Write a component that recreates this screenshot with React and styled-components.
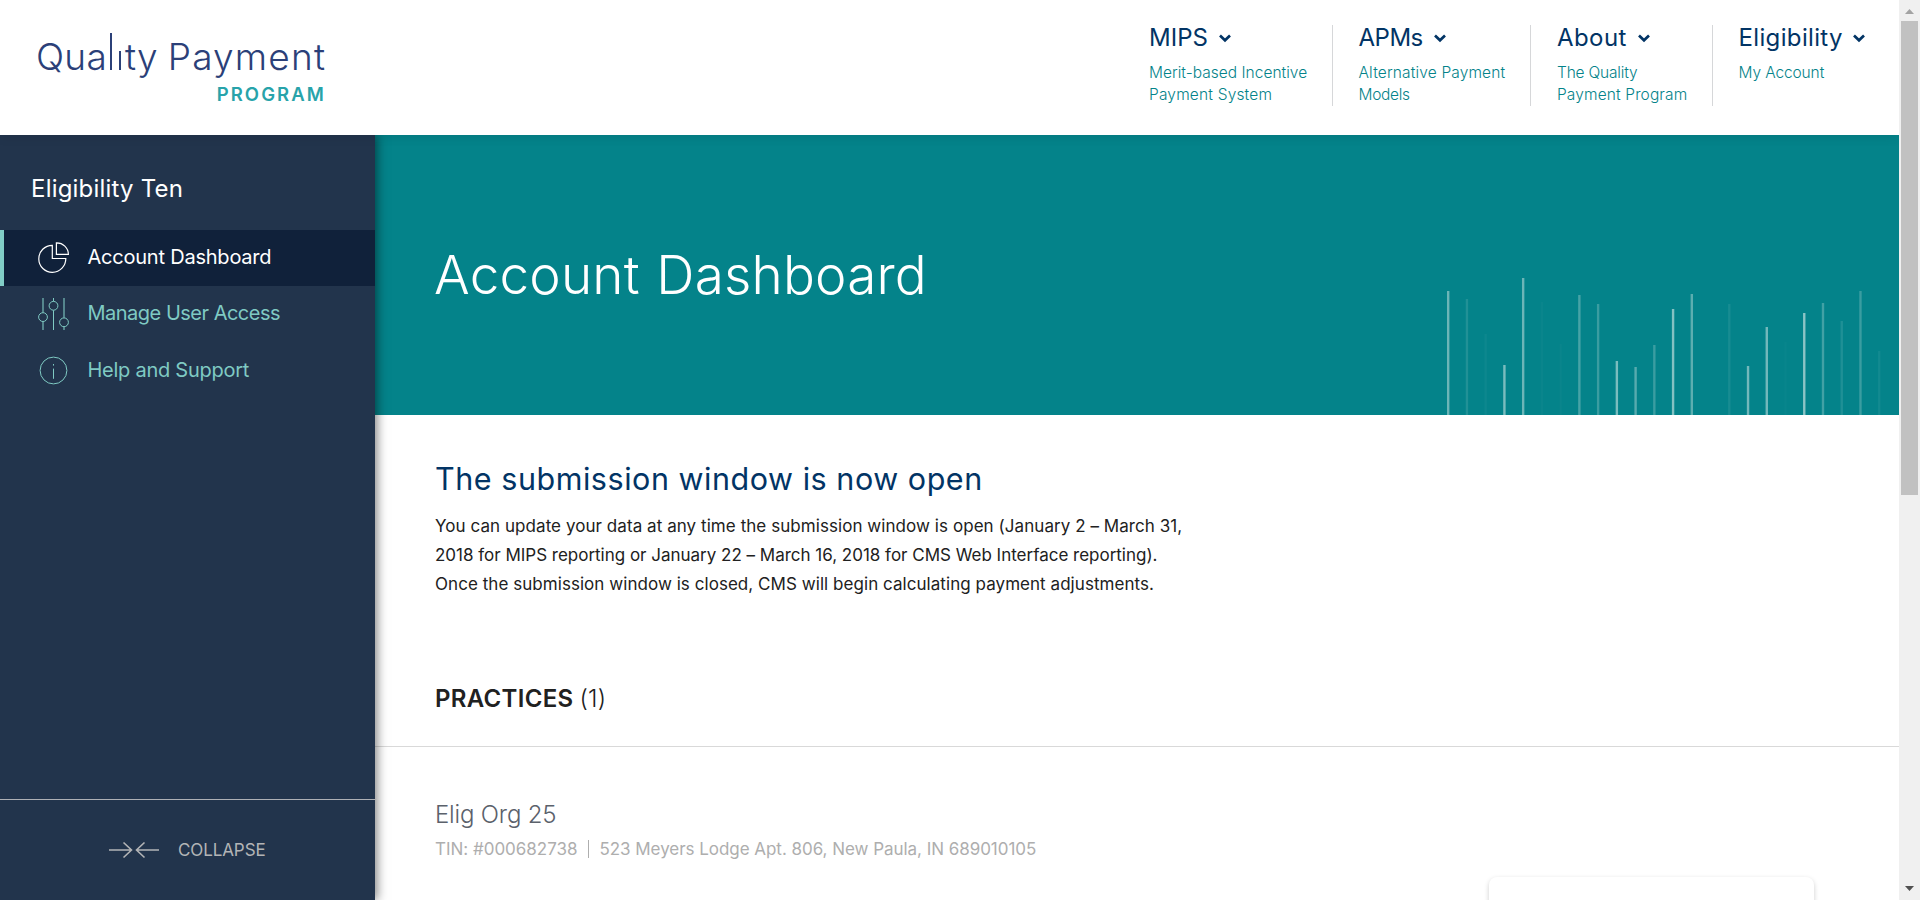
import React from 'react';
import styled, { createGlobalStyle } from 'styled-components';

const GlobalStyle = createGlobalStyle`
  * { box-sizing: border-box; }
  body { margin: 0; background: #fff; overflow: hidden; }
  h1, h2, h3, p { margin: 0; }
  a { color: inherit; text-decoration: none; }
`;

const Window = styled.div`
  display: flex;
  width: 1920px;
  height: 900px;
  overflow: hidden;
  font-family: Inter, 'Liberation Sans', sans-serif;
`;

const Page = styled.div`
  display: flex;
  flex-direction: column;
  width: 1899px;
  overflow: hidden;
`;

const Header = styled.header`
  position: relative;
  z-index: 2;
  display: flex;
  justify-content: space-between;
  flex: none;
  height: 135px;
  padding: 25px 0 0 36px;
  background: #fff;
  box-shadow: 0 0 12px rgba(0, 0, 0, 0.12);
`;

const Logo = styled.a`
  display: flex;
  flex-direction: column;
  width: 289px;
  padding-top: 6px;
`;

const LogoName = styled.div`
  display: flex;
  justify-content: space-between;
  color: #2b4078;
  font-size: 37px;
  font-weight: 300;
  line-height: 52px;
`;

const LogoWord = styled.span`
  letter-spacing: ${(p) => p.$spacing}px;
  margin-right: ${(p) => -p.$spacing}px;
`;

/* a letter whose stem is drawn at its own height: the logo's tall l and dotless i */
const StemLetter = styled.span`
  position: relative;
  &::before {
    content: '';
    position: absolute;
    left: 1px;
    right: 1px;
    top: -1px;
    height: 37px;
    background: linear-gradient(#2b4078, #2b4078) center bottom / 2px ${(p) => p.$height}px no-repeat #fff;
  }
`;

const LogoTag = styled.div`
  align-self: flex-end;
  margin-top: -1px;
  margin-right: -1px;
  color: #28a3aa;
  font-size: 18.5px;
  font-weight: 600;
  line-height: 24px;
  letter-spacing: 2.1px;
`;

const Nav = styled.nav`
  display: flex;
  height: 81px;
`;

const NavItem = styled.div`
  width: ${(p) => p.$width}px;
  padding: 1px 0 0 ${(p) => p.$inset}px;
  border-left: ${(p) => (p.$first ? 'none' : '1px solid #d6d7d9')};
`;

const NavTitle = styled.div`
  display: flex;
  align-items: center;
  gap: ${(p) => p.$gap}px;
  color: #023465;
  font-size: 24px;
  line-height: 24px;
  letter-spacing: ${(p) => p.$spacing}px;
`;

const NavText = styled.div`
  margin-top: 12px;
  color: #04838a;
  font-size: 15.5px;
  font-weight: 300;
  line-height: 22px;
`;

const Line = styled.span`
  display: block;
  white-space: nowrap;
  letter-spacing: ${(p) => p.$spacing}px;
`;

const Body = styled.div`
  display: flex;
  flex: 1;
  min-height: 0;
`;

const Sidebar = styled.aside`
  display: flex;
  flex-direction: column;
  flex: none;
  z-index: 1;
  width: 375px;
  background: #22344c;
  box-shadow: 2px 0 10px rgba(0, 0, 0, 0.5);
`;

const AccountName = styled.div`
  padding: 39px 0 26px 31px;
  color: #fff;
  font-size: 24px;
  line-height: 30px;
  letter-spacing: 0.2px;
`;

const MenuItem = styled.a`
  display: flex;
  align-items: center;
  gap: 17px;
  height: ${(p) => p.$height}px;
  padding-left: 34px;
  border-left: 4px solid ${(p) => (p.$active ? '#81cdc6' : 'transparent')};
  background: ${(p) => (p.$active ? '#10213a' : 'transparent')};
  color: ${(p) => (p.$active ? '#fff' : '#7fcac3')};
`;

const MenuLabel = styled.span`
  padding: 0 0 2px 0.5px;
  font-size: 20px;
  line-height: 26px;
  letter-spacing: ${(p) => p.$spacing}px;
`;

const Collapse = styled.div`
  display: flex;
  align-items: center;
  gap: 18px;
  height: 101px;
  margin-top: auto;
  padding-left: 109px;
  border-top: 1px solid #aeb0b5;
  color: #b3b4b6;
  font-size: 17px;
  letter-spacing: -0.1px;
`;

const Main = styled.main`
  flex: 1;
  min-width: 0;
`;

const Hero = styled.section`
  display: flex;
  align-items: center;
  justify-content: space-between;
  height: 280px;
  padding-left: 60px;
  background: #04838a;
`;

const HeroTitle = styled.h1`
  margin-left: -1px;
  color: #fff;
  font-size: 53px;
  font-weight: 300;
  line-height: 64px;
  letter-spacing: 0.2px;
  word-spacing: 1.5px;
`;

const HeroBars = styled.svg`
  align-self: flex-end;
  display: block;
`;

const Intro = styled.section`
  padding: 44px 0 0 60px;
`;

const IntroTitle = styled.h2`
  color: #023465;
  font-size: 30.5px;
  font-weight: 400;
  line-height: 40px;
  letter-spacing: 0.54px;
`;

const IntroText = styled.p`
  margin-top: 13px;
  color: #212121;
  font-size: 17px;
  line-height: 29px;
`;

const PracticesHeader = styled.div`
  display: flex;
  gap: 6px;
  padding: 85px 0 32px 60px;
  border-bottom: 1px solid #d9d9d9;
  color: #212121;
  font-size: 24px;
  line-height: 30px;
`;

const PracticesTitle = styled.h2`
  font-size: 24px;
  font-weight: 600;
  letter-spacing: 0.32px;
`;

const Count = styled.span`
  font-weight: 300;
  letter-spacing: 0.2px;
`;

const Practice = styled.section`
  padding: 53px 85px 0 60px;
`;

const PracticeName = styled.h3`
  color: #5b616b;
  font-size: 24px;
  font-weight: 300;
  line-height: 30px;
  letter-spacing: -0.18px;
`;

const PracticeMeta = styled.div`
  display: flex;
  align-items: center;
  margin-top: 7px;
  color: #aeaeae;
  font-size: 17px;
  line-height: 24px;
`;

const MetaDivider = styled.span`
  width: 1px;
  height: 18px;
  margin: 0 10px 0 11px;
  background: #aeaeae;
`;

const Card = styled.div`
  width: 325px;
  height: 120px;
  margin: 16px 0 0 auto;
  border-radius: 8px;
  background: #fff;
  box-shadow: 0 2px 5px rgba(0, 0, 0, 0.2);
`;

const ScrollTrack = styled.div`
  display: flex;
  flex-direction: column;
  align-items: center;
  width: 21px;
  background: #f0f0f0;
`;

const ScrollArrow = styled.svg`
  display: block;
  flex: none;
  width: 21px;
  height: 21px;
`;

const ScrollThumb = styled.div`
  width: 17px;
  height: 474px;
  margin: 0 0 auto;
  background: #c1c1c1;
`;

const Chevron = () => (
  <svg width="12" height="9" viewBox="0 0 12 9" fill="none" stroke="#023465" strokeWidth="2.7">
    <path d="M1 1.6 L6 6.3 L11 1.6" />
  </svg>
);

const PieIcon = () => (
  <svg width="32" height="32" viewBox="0 0 32 32" fill="none" stroke="#fff" strokeWidth="1.2">
    <path d="M14.3 3.3 V16.5 H27.8 A13.5 13.5 0 1 1 14.3 3.3 Z" />
    <path d="M18.4 12.4 V0.8 A11.7 11.7 0 0 1 30.4 12.4 Z" />
  </svg>
);

const SlidersIcon = () => (
  <svg width="32" height="32" viewBox="0 0 32 32" fill="none" stroke="#7fcac3" strokeWidth="1">
    <path d="M5 0 V14.6 M5 23.6 V32 M26 0 V19.8 M26 28.8 V32" strokeWidth="2" opacity="0.55" />
    <path d="M15.5 0 V3.3 M15.5 12.3 V32" />
    <circle cx="5" cy="19.1" r="4.4" />
    <circle cx="15.5" cy="7.8" r="4.4" />
    <circle cx="26" cy="24.3" r="4.4" />
  </svg>
);

const InfoIcon = () => (
  <svg width="32" height="32" viewBox="0 0 32 32" fill="none" stroke="#7fcac3" strokeWidth="1">
    <circle cx="15.5" cy="15.5" r="13.4" />
    <path d="M15.5 9 V10.6 M15.5 13.6 V23.8" />
  </svg>
);

const CollapseIcon = () => (
  <svg width="51" height="18" viewBox="0 0 51 18" fill="none" stroke="#b3b4b6" strokeWidth="1.6">
    <path d="M0 9 H23 M14.5 1.5 L22.5 9 L14.5 16.5" />
    <path d="M50 9 H27 M35.5 1.5 L27.5 9 L35.5 16.5" />
  </svg>
);

/* each bar: slot number, height, opacity */
const BARS = [
  [0, 124, 0.42], [1, 116, 0.12], [2, 81, 0.04], [3, 50, 0.48], [4, 137, 0.42],
  [5, 113, 0.03], [6, 71, 0.03], [7, 120, 0.27], [8, 111, 0.22], [9, 54, 0.48],
  [10, 48, 0.34], [11, 70, 0.22], [12, 106, 0.52], [13, 121, 0.36], [15, 111, 0.08],
  [16, 49, 0.45], [17, 88, 0.45], [18, 73, 0.02], [19, 102, 0.55], [20, 112, 0.25],
  [21, 94, 0.11], [22, 124, 0.22], [23, 64, 0.06],
];

const Bars = () => (
  <HeroBars width="453" height="140">
    {BARS.map(([slot, height, opacity]) => (
      <rect key={slot} x={1 + slot * 18.74} y={140 - height} width="2.4" height={height} fill="#e4efec" opacity={opacity * 1.1} />
    ))}
  </HeroBars>
);

const NAV = [
  { title: 'MIPS', spacing: 0.02, gap: 11, width: 183, inset: 0, first: true, lines: [['Merit-based Incentive', 0.02], ['Payment System', 0.18]] },
  { title: 'APMs', spacing: -0.5, gap: 11, width: 198, inset: 25.5, lines: [['Alternative Payment', 0.15], ['Models', -0.3]] },
  { title: 'About', spacing: 0.42, gap: 11, width: 182, inset: 26, lines: [['The Quality', -0.2], ['Payment Program', 0.13]] },
  { title: 'Eligibility', spacing: 0.35, gap: 10.5, width: 187, inset: 25.5, lines: [['My Account', -0.11]] },
];

const MENU = [
  { label: 'Account Dashboard', spacing: -0.22, height: 56, icon: <PieIcon />, active: true },
  { label: 'Manage User Access', spacing: -0.5, height: 56, icon: <SlidersIcon /> },
  { label: 'Help and Support', spacing: -0.26, height: 58, icon: <InfoIcon /> },
];

export default function App() {
  return (
    <Window>
      <GlobalStyle />
      <Page>
        <Header>
          <Logo>
            <LogoName>
              <LogoWord $spacing={0.28}>
                Qua<StemLetter $height={37}>l</StemLetter><StemLetter $height={19}>i</StemLetter>ty
              </LogoWord>
              <LogoWord $spacing={1.2}>Payment</LogoWord>
            </LogoName>
            <LogoTag>PROGRAM</LogoTag>
          </Logo>
          <Nav>
            {NAV.map((item) => (
              <NavItem key={item.title} $width={item.width} $inset={item.inset} $first={item.first}>
                <NavTitle $spacing={item.spacing} $gap={item.gap}>{item.title}<Chevron /></NavTitle>
                <NavText>
                  {item.lines.map(([text, spacing]) => <Line key={text} $spacing={spacing}>{text}</Line>)}
                </NavText>
              </NavItem>
            ))}
          </Nav>
        </Header>
        <Body>
          <Sidebar>
            <AccountName>Eligibility Ten</AccountName>
            {MENU.map((item) => (
              <MenuItem key={item.label} $active={item.active} $height={item.height}>
                {item.icon}
                <MenuLabel $spacing={item.spacing}>{item.label}</MenuLabel>
              </MenuItem>
            ))}
            <Collapse><CollapseIcon />COLLAPSE</Collapse>
          </Sidebar>
          <Main>
            <Hero>
              <HeroTitle>Account Dashboard</HeroTitle>
              <Bars />
            </Hero>
            <Intro>
              <IntroTitle>The submission window is now open</IntroTitle>
              <IntroText>
                <Line $spacing={0.06}>You can update your data at any time the submission window is open (January 2 – March 31,</Line>
                <Line $spacing={-0.01}>2018 for MIPS reporting or January 22 – March 16, 2018 for CMS Web Interface reporting).</Line>
                <Line $spacing={0.05}>Once the submission window is closed, CMS will begin calculating payment adjustments.</Line>
              </IntroText>
            </Intro>
            <PracticesHeader>
              <PracticesTitle>PRACTICES</PracticesTitle>
              <Count>(1)</Count>
            </PracticesHeader>
            <Practice>
              <PracticeName>Elig Org 25</PracticeName>
              <PracticeMeta>
                <Line $spacing={-0.02}>TIN: #000682738</Line>
                <MetaDivider />
                <Line $spacing={-0.04}>523 Meyers Lodge Apt. 806, New Paula, IN 689010105</Line>
              </PracticeMeta>
              <Card />
            </Practice>
          </Main>
        </Body>
      </Page>
      <ScrollTrack>
        <ScrollArrow viewBox="0 0 21 21"><path d="M6 14 L10.5 9 L15 14 Z" fill="#a3a3a3" /></ScrollArrow>
        <ScrollThumb />
        <ScrollArrow viewBox="0 0 21 21"><path d="M6 7 L10.5 12 L15 7 Z" fill="#505050" /></ScrollArrow>
      </ScrollTrack>
    </Window>
  );
}
